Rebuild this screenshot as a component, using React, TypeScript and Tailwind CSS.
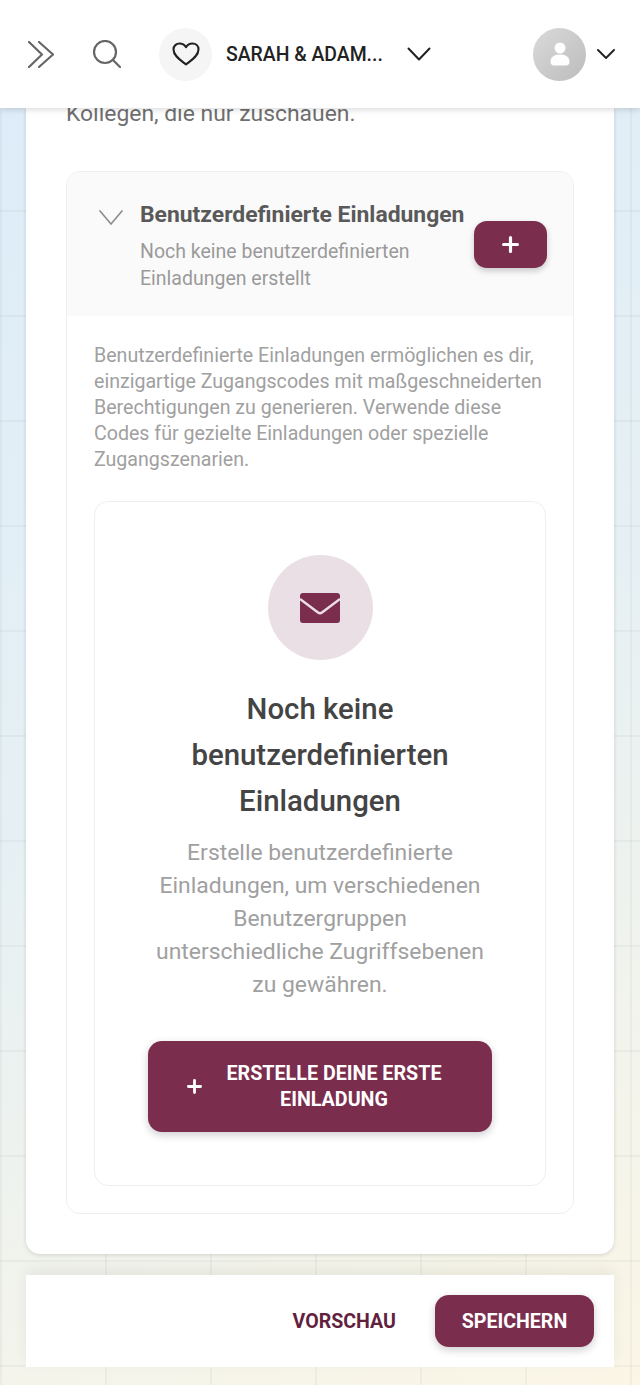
import React from "react";

const Plus = ({ className = "" }: { className?: string }) => (
  <svg viewBox="0 0 16 16" className={className} fill="none" stroke="currentColor" strokeWidth="3" strokeLinecap="round">
    <path d="M8 1.500v13M1.500 8h13" />
  </svg>
);

export default function App() {
  return (
    <div className="relative h-[1385px] w-[640px] overflow-hidden bg-[linear-gradient(155deg,#dcecf9_0%,#e6f0f4_50%,#fbf6e6_100%)] font-['Roboto',sans-serif]">
      <div className="flex h-full flex-col bg-[linear-gradient(rgba(110,125,130,0.07)_2px,transparent_2px),linear-gradient(90deg,rgba(110,125,130,0.07)_2px,transparent_2px)] bg-[size:105px_105px] bg-[position:105px_0]">
        <header className="relative z-10 flex h-[108px] shrink-0 items-center bg-white shadow-[0_2px_6px_rgba(0,0,0,0.14)]">
          <svg viewBox="0 0 26 27" className="ml-[28px] h-[27px] w-[26px] text-[#666]" fill="none" stroke="currentColor" strokeWidth="2.200" strokeLinecap="round" strokeLinejoin="round">
            <path d="M1 1l13 12.500L1 26M11 1l14 12.500L11 26" />
          </svg>
          <svg viewBox="0 0 28 28" className="ml-[39px] h-[28px] w-[28px] text-[#666]" fill="none" stroke="currentColor" strokeWidth="2.200" strokeLinecap="round">
            <circle cx="12" cy="12" r="11" />
            <path d="M20 20l7 7" />
          </svg>
          <div className="ml-[38px] flex h-[53px] w-[53px] items-center justify-center rounded-full bg-[#f5f5f5]">
            <svg viewBox="0 0 28 24" className="h-[24px] w-[28px] text-[#222]" fill="none" stroke="currentColor" strokeWidth="2.100" strokeLinejoin="round">
              <path d="M14 22.500C9 18.500 1.500 14 1.500 7.500 1.500 3.800 4.300 1.500 7.600 1.500 10.200 1.500 12.600 3 14 5.200 15.400 3 17.800 1.500 20.400 1.500 23.700 1.500 26.500 3.800 26.500 7.500 26.500 14 19 18.500 14 22.500z" />
            </svg>
          </div>
          <span className="ml-[14px] w-[157px] whitespace-nowrap pt-[2px] text-[19.400px] font-medium text-[#222]">SARAH &amp; ADAM...</span>
          <svg viewBox="0 0 24 14" className="ml-[24px] h-[14px] w-[24px] text-[#222]" fill="none" stroke="currentColor" strokeWidth="2" strokeLinecap="round" strokeLinejoin="round">
            <path d="M1.500 1.500L12 12.500 22.500 1.500" />
          </svg>
          <div className="ml-auto flex h-[53px] w-[53px] items-center justify-center rounded-full bg-[linear-gradient(135deg,#dadada,#bcbcbc)]">
            <svg viewBox="0 0 20 24" className="h-[24px] w-[20px] text-white" fill="currentColor">
              <circle cx="10" cy="6" r="5.500" />
              <path d="M0.500 20c0-5 3.500-7.500 9.500-7.500s9.500 2.500 9.500 7.500c0 2-1.500 3.500-3.500 3.500H4c-2 0-3.500-1.500-3.500-3.500z" />
            </svg>
          </div>
          <svg viewBox="0 0 18 10" className="ml-[11px] mr-[25px] h-[10px] w-[18px] text-[#222]" fill="none" stroke="currentColor" strokeWidth="1.900" strokeLinecap="round" strokeLinejoin="round">
            <path d="M1 1l8 8 8-8" />
          </svg>
        </header>

        <main className="mx-[26px] flex flex-col">
          <section className="h-[1146px] rounded-b-[14px] bg-white px-[40px] shadow-[0_1px_4px_rgba(0,0,0,0.14)]">
            <p className="-mt-[8px] whitespace-nowrap text-[22.900px] leading-[28px] text-[#6f6f6f]">Kollegen, die nur zuschauen.</p>
            <div className="mt-[43px] overflow-hidden rounded-[14px] border border-[#eeeeee]">
              <div className="flex h-[144px] bg-[#fafafa] pl-[32px] pr-[26px]">
                <svg viewBox="0 0 24 15" className="mt-[38px] h-[15px] w-[24px] shrink-0 text-[#8f8f8f]" fill="none" stroke="currentColor" strokeWidth="1.700" strokeLinecap="round" strokeLinejoin="round">
                  <path d="M1 1l11 13L23 1" />
                </svg>
                <div className="ml-[17px] min-w-0 flex-1">
                  <h2 className="mt-[28px] whitespace-nowrap text-[22.900px] font-bold leading-[30px] text-[#595959]">Benutzerdefinierte Einladungen</h2>
                  <p className="mt-[8px] w-[310px] text-[19.500px] leading-[27px] text-[#9a9a9a]">Noch keine benutzerdefinierten Einladungen erstellt</p>
                </div>
                <button className="mt-[49px] flex h-[47px] w-[73px] shrink-0 items-center justify-center rounded-[13px] bg-[#7b2d4e] text-white shadow-[0_3px_6px_rgba(0,0,0,0.2)]">
                  <Plus className="h-[17px] w-[17px]" />
                </button>
              </div>
              <div className="px-[27px] pb-[27px]">
                <p className="mt-[27px] text-[19.600px] leading-[26.100px] text-[#a0a0a0]">
                  Benutzerdefinierte Einladungen ermöglichen es dir, einzigartige Zugangscodes mit maßgeschneiderten Berechtigungen zu generieren. Verwende diese Codes für gezielte Einladungen oder spezielle Zugangszenarien.
                </p>
                <div className="mt-[28px] flex h-[685px] flex-col items-center rounded-[14px] border border-[#eeeeee] bg-white px-[53px]">
                  <div className="mt-[53px] flex h-[105px] w-[105px] shrink-0 items-center justify-center rounded-full bg-[#eadfe4]">
                    <svg viewBox="0 0 40 30" className="h-[30px] w-[40px] text-[#7b2d4e]">
                      <rect x="0" y="0" width="40" height="30" rx="3" fill="currentColor" />
                      <path d="M0 6L18 19.500q2 1.500 4 0L40 6" fill="none" stroke="#eadfe4" strokeWidth="2.400" />
                    </svg>
                  </div>
                  <h3 className="mt-[26px] text-center text-[29.400px] font-medium leading-[46px] text-[#444444]">Noch keine benutzerdefinierten Einladungen</h3>
                  <p className="mt-[12px] text-center text-[22.900px] leading-[33px] text-[#a0a0a0]">Erstelle benutzerdefinierte Einladungen, um verschiedenen Benutzergruppen unterschiedliche Zugriffsebenen zu gewähren.</p>
                  <button className="mt-[40px] flex h-[91px] w-[344px] shrink-0 items-center rounded-[14px] bg-[#7b2d4e] pl-[39px] pr-[41px] text-white shadow-[0_3px_8px_rgba(0,0,0,0.2)]">
                    <Plus className="h-[15px] w-[15px] shrink-0" />
                    <span className="ml-[15px] flex-1 text-center text-[19.700px] font-bold leading-[26px]">ERSTELLE DEINE ERSTE EINLADUNG</span>
                  </button>
                </div>
              </div>
            </div>
          </section>

          <footer className="mt-[21px] flex h-[92px] items-center justify-end bg-white pr-[20px] shadow-[0_-6px_14px_rgba(0,0,0,0.06)]">
            <span className="pt-[2px] text-[19.600px] font-bold text-[#631f3e]">VORSCHAU</span>
            <button className="ml-[39px] h-[52px] w-[159px] rounded-[14px] bg-[#7b2d4e] pt-[2px] text-[19.600px] font-bold text-white shadow-[0_3px_8px_rgba(0,0,0,0.2)]">SPEICHERN</button>
          </footer>
        </main>
      </div>
    </div>
  );
}
